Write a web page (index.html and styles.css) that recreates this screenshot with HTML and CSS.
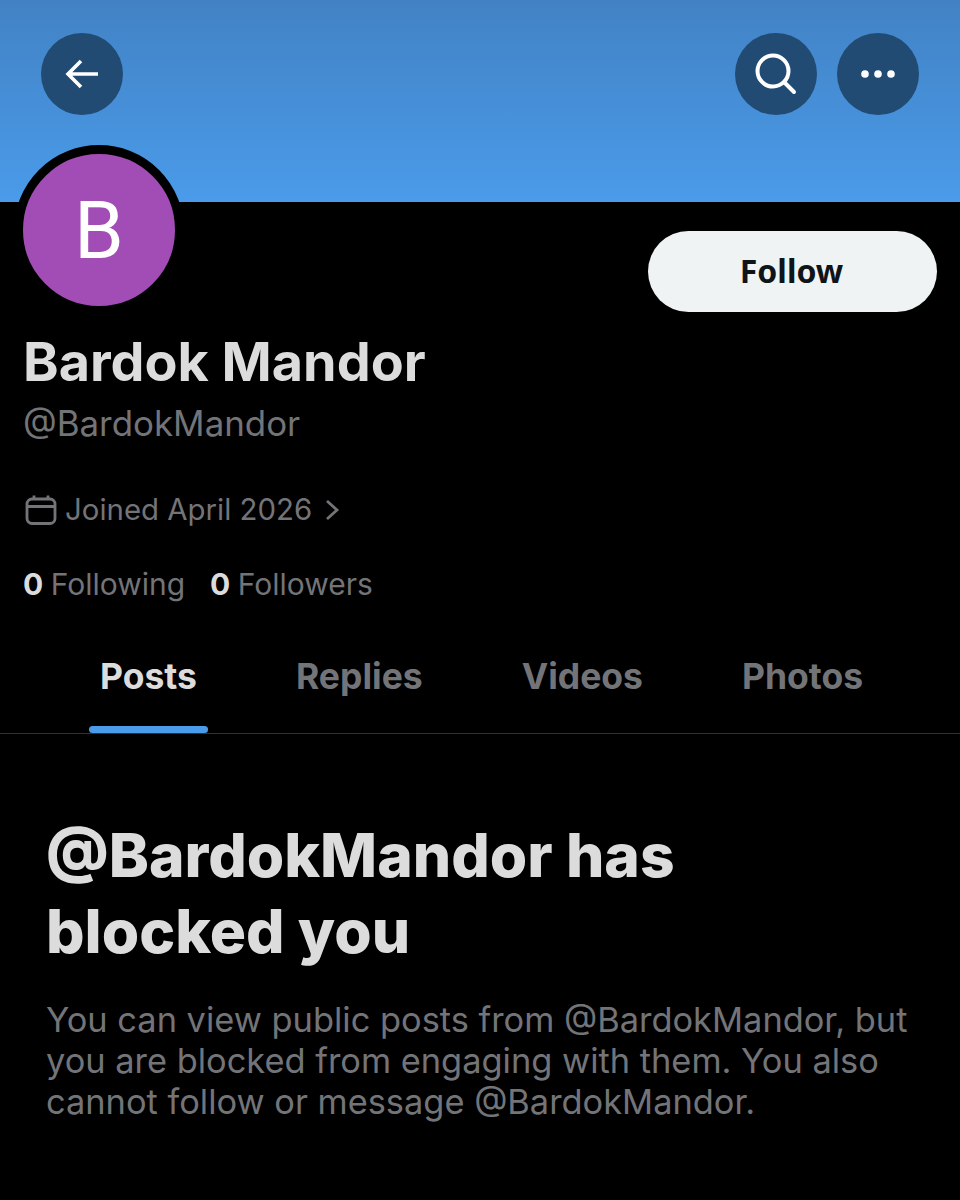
FILE: index.html
```html
<!DOCTYPE html>
<html lang="en">
<head>
  <meta charset="UTF-8" />
  <title>Bardok Mandor</title>
  <link rel="stylesheet" href="styles.css">
</head>
<body>
  <div class="banner">
    <button class="round-btn">
      <svg width="36" height="32" viewBox="0 0 36 32" fill="none" stroke="#fff" stroke-width="3.6">
        <path d="M3 16H34M17 3L4 16L17 29"/>
      </svg>
    </button>
    <div class="banner-right">
      <button class="round-btn">
        <svg width="42" height="42" viewBox="0 0 42 42" fill="none" stroke="#fff" stroke-width="4">
          <circle cx="18" cy="18" r="15.5"/>
          <path d="M29.5 29.5L39 39" stroke-linecap="round"/>
        </svg>
      </button>
      <button class="round-btn">
        <svg width="36" height="10" viewBox="0 0 36 10" fill="#fff">
          <circle cx="5" cy="5" r="3.8"/>
          <circle cx="18" cy="5" r="3.8"/>
          <circle cx="31" cy="5" r="3.8"/>
        </svg>
      </button>
    </div>
  </div>

  <div class="profile">
    <div class="profile-top">
      <div class="avatar">B</div>
      <button class="follow-btn">Follow</button>
    </div>
    <h1 class="name">Bardok Mandor</h1>
    <div class="handle">@BardokMandor</div>
    <div class="joined">
      <svg width="32" height="30" viewBox="0 0 32 30" fill="none" stroke="#737478" stroke-width="2.8">
        <rect x="2" y="4" width="28" height="24.5" rx="5"/>
        <path d="M2 11.5H30M9 0.5V5M23 0.5V5"/>
      </svg>
      <span>Joined April 2026</span>
      <svg class="chevron" width="16" height="22" viewBox="0 0 16 22" fill="none" stroke="#737478" stroke-width="2.8">
        <path d="M3 2L13 11L3 20"/>
      </svg>
    </div>
    <div class="stats">
      <span><b>0</b> Following</span>
      <span><b>0</b> Followers</span>
    </div>
  </div>

  <nav class="tabs">
    <a class="tab active">Posts</a>
    <a class="tab">Replies</a>
    <a class="tab">Videos</a>
    <a class="tab">Photos</a>
  </nav>

  <div class="blocked">
    <h2>@BardokMandor has blocked you</h2>
    <p>You can view public posts from @BardokMandor, but you are blocked from engaging with them. You also cannot follow or message @BardokMandor.</p>
  </div>
</body>
</html>
```

FILE: styles.css
```css
body {
  margin: 0;
  background: #000;
  color: #e7e9ea;
  font-family: "Inter", "Liberation Sans", sans-serif;
}
.banner {
  height: 202px;
  box-sizing: border-box;
  padding: 33px 41px 0;
  display: flex;
  justify-content: space-between;
  align-items: flex-start;
  background: linear-gradient(180deg, #4282c4 0%, #4a9bea 100%);
}
.banner-right {
  display: flex;
  gap: 20px;
}
.round-btn {
  width: 82px;
  height: 82px;
  padding: 0;
  border: 0;
  border-radius: 50%;
  background: #214b72;
  display: flex;
  align-items: center;
  justify-content: center;
}
.profile {
  padding: 0 23px;
}
.profile-top {
  display: flex;
  justify-content: space-between;
  align-items: flex-start;
}
.avatar {
  width: 152px;
  height: 152px;
  margin: -57px 0 0 -9px;
  border: 9px solid #000;
  border-radius: 50%;
  background: #a24cb5;
  color: #fff;
  font-family: "Roboto", sans-serif;
  font-size: 80px;
  line-height: 154px;
  text-align: center;
}
.follow-btn {
  width: 289px;
  height: 81px;
  margin: 29px 0 0;
  padding: 0 2px 2px 0;
  border: 0;
  border-radius: 41px;
  background: #eff3f4;
  color: #0f1419;
  font-family: "Noto Sans", sans-serif;
  font-size: 32px;
  font-weight: 700;
}
.name {
  margin: 17px 0 0;
  font-size: 53.9px;
  line-height: 60px;
  font-weight: 700;
  color: #dcdcdc;
}
.handle {
  margin-top: 11px;
  font-size: 34.9px;
  line-height: 40px;
  color: #737478;
}
.joined {
  margin-top: 47px;
  margin-left: 2px;
  display: flex;
  align-items: center;
  gap: 8px;
  font-size: 29.4px;
  line-height: 40px;
  color: #737478;
}
.chevron {
  margin-left: 4px;
}
.stats {
  margin-top: 34px;
  display: flex;
  gap: 25px;
  font-size: 30px;
  line-height: 40px;
  word-spacing: -1px;
  color: #737478;
}
.stats b {
  color: #dcdcdc;
}
.tabs {
  margin-top: 37px;
  height: 93px;
  box-sizing: border-box;
  border-bottom: 1px solid #2f3336;
  display: flex;
  padding-left: 100px;
  font-size: 35.5px;
  line-height: 43px;
  font-weight: 700;
  color: #737478;
}
.tab {
  position: relative;
  padding-top: 14px;
  margin-right: 99px;
}
.tab.active {
  color: #dcdcdc;
}
.tab.active::after {
  content: "";
  position: absolute;
  left: -11px;
  right: -11px;
  bottom: 0;
  height: 7px;
  border-radius: 4px;
  background: #4a9bea;
}
.blocked {
  padding: 83px 40px 0 46px;
}
.blocked h2 {
  margin: 0;
  font-size: 60.5px;
  line-height: 76px;
  font-weight: 800;
  color: #dcdcdc;
}
.blocked p {
  margin: 30px 0 0;
  font-size: 34.4px;
  line-height: 41px;
  color: #737478;
}
```
